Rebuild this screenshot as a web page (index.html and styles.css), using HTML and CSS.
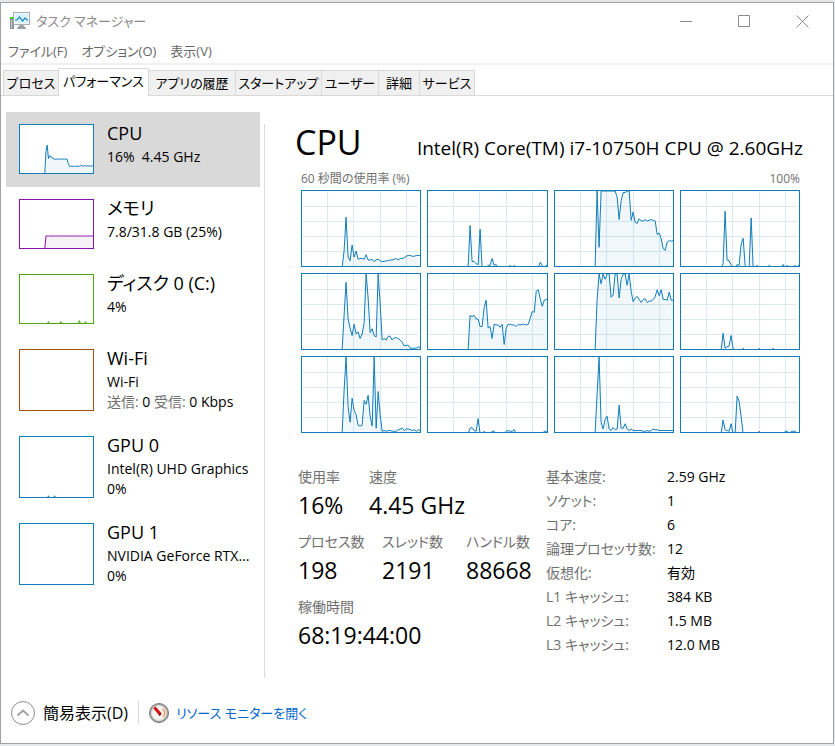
FILE: index.html
```html
<!doctype html>
<html lang="ja">
<head>
  <meta charset="UTF-8" />
  <meta name="viewport" content="width=device-width, initial-scale=1.0" />
  <title>タスク マネージャー</title>
  <link rel="stylesheet" href="styles.css">
</head>
<body>
  <div class="window">
    <header class="title-bar">
      <svg class="app-icon" width="20" height="18" viewBox="0 0 20 18">
        <rect x="0" y="5" width="4" height="12" fill="#8d9094" />
        <rect x="0" y="5" width="3" height="2" fill="#2fd01c" />
        <rect x="1" y="8" width="1" height="8" fill="#c9cccf" />
        <rect x="3.5" y="0.5" width="16" height="12" fill="#f4f6f7" stroke="#a9adb0" />
        <rect x="5" y="2" width="13" height="9" fill="#d5f1fc" />
        <path d="M5 8 L7 8 L9.500 5 L12.500 9 L15 6 L18 8.500" fill="none" stroke="#1686c5" stroke-width="1.200" />
        <path d="M10 13 H13 L16 16 V17 H7 V16 Z" fill="#9b9fa2" />
      </svg>
      <h1 class="title">タスク マネージャー</h1>
      <div class="window-buttons">
        <button type="button" aria-label="最小化">
          <svg width="13" height="13" viewBox="0 0 13 13"><path d="M0 6.500 H12" /></svg>
        </button>
        <button type="button" aria-label="最大化">
          <svg width="13" height="13" viewBox="0 0 13 13"><path d="M0.500 0.500 H11.500 V11.500 H0.500 Z" /></svg>
        </button>
        <button type="button" aria-label="閉じる">
          <svg width="13" height="13" viewBox="0 0 13 13"><path d="M0.500 0.500 L12.500 12.500 M12.500 0.500 L0.500 12.500" /></svg>
        </button>
      </div>
    </header>

    <nav class="menu-bar">
      <button type="button">ファイル(F)</button>
      <button type="button">オプション(O)</button>
      <button type="button">表示(V)</button>
    </nav>

    <div class="tabs" role="tablist">
      <button type="button" role="tab">プロセス</button>
      <button type="button" role="tab" class="active" aria-selected="true">パフォーマンス</button>
      <button type="button" role="tab">アプリの履歴</button>
      <button type="button" role="tab">スタートアップ</button>
      <button type="button" role="tab">ユーザー</button>
      <button type="button" role="tab">詳細</button>
      <button type="button" role="tab">サービス</button>
    </div>

    <div class="content">
      <aside class="sidebar">
        <button type="button" class="resource selected">
          <svg class="chart thumb" data-values="0,45,58,30,36,33,33,29,29,29,29,29,29,29,29,29,29,29,29,20,14,14,14,14,14,14,14,14,14,16,15,14,16,15,14,16,14,15,14,16"></svg>
          <span class="resource-text">
            <span class="resource-name">CPU</span>
            <span>16%&nbsp; 4.45 GHz</span>
          </span>
        </button>
        <button type="button" class="resource memory">
          <svg class="chart thumb" data-values="0,25,25,25,25,25,25,25,25,25,25,25,25,25,25,25,25,25,25,25,25,25,25,25,25,25,25,25,25,25,25,25,25,25,25,25,25,25,25,25"></svg>
          <span class="resource-text">
            <span class="resource-name">メモリ</span>
            <span>7.8/31.8 GB (25%)</span>
          </span>
        </button>
        <button type="button" class="resource disk">
          <svg class="chart thumb" data-values="0,0,0,3,0,0,0,0,0,0,0,0,0,3,0,0,0,0,0,0,0,0,0,0,0,0,0,0,5,0,0,0,0,3,0,0,0,0,0,0"></svg>
          <span class="resource-text">
            <span class="resource-name">ディスク 0 (C:)</span>
            <span>4%</span>
          </span>
        </button>
        <button type="button" class="resource wifi">
          <svg class="chart thumb tall" data-values="0"></svg>
          <span class="resource-text">
            <span class="resource-name">Wi-Fi</span>
            <span>Wi-Fi</span>
            <span><span class="muted">送信:</span> 0 <span class="muted">受信:</span> 0 Kbps</span>
          </span>
        </button>
        <button type="button" class="resource">
          <svg class="chart thumb tall" data-values="0,0,0,2,0,0,0,0,2,0,0,0,0,0,0,0,0,0,0,0,0,0,0,0,0,0,0,0,0,0,0,0,0,0,0,0,0,0,0,0"></svg>
          <span class="resource-text">
            <span class="resource-name">GPU 0</span>
            <span>Intel(R) UHD Graphics</span>
            <span>0%</span>
          </span>
        </button>
        <button type="button" class="resource">
          <svg class="chart thumb tall" data-values="0"></svg>
          <span class="resource-text">
            <span class="resource-name">GPU 1</span>
            <span>NVIDIA GeForce RTX...</span>
            <span>0%</span>
          </span>
        </button>
      </aside>

      <main class="details">
        <div class="heading">
          <h2>CPU</h2>
          <p>Intel(R) Core(TM) i7-10750H CPU @ 2.60GHz</p>
        </div>
        <div class="chart-labels">
          <span>60 秒間の使用率 (%)</span>
          <span>100%</span>
        </div>

        <div class="cores">
          <svg class="chart core" data-values="0,20,65,12,7,28,12,20,9,10,10,9,15,8,8,9,6,8,9,7,6,6,7,7,8,8,9,10,8,10,10,11,13,14,14,13,13,14,14,14"></svg>
          <svg class="chart core" data-values="0,54,6,6,3,2,49,0,0,0,1,1,10,1,2,0,0,0,0,0,0,1,0,1,0,0,0,0,0,0,0,0,0,0,0,0,5,1,0,1"></svg>
          <svg class="chart core" data-values="0,100,25,100,100,100,100,100,100,100,100,92,62,87,98,98,100,100,61,72,58,57,63,60,60,62,60,61,62,61,60,42,44,36,23,21,32,34,33,34"></svg>
          <svg class="chart core" data-values="0,3,73,8,7,2,0,0,2,1,29,37,1,0,0,64,0,0,1,0,0,0,0,0,1,0,0,0,0,0,0,2,0,1,0,0,0,1,0,2"></svg>
          <svg class="chart core" data-values="0,45,89,40,28,18,33,20,23,14,20,35,100,68,22,27,18,16,100,60,12,14,12,17,17,12,15,15,14,12,9,4,5,5,1,1,1,1,3,2"></svg>
          <svg class="chart core" data-values="0,45,43,45,40,40,30,30,55,65,28,30,14,33,32,32,29,33,6,28,33,33,32,32,30,33,32,33,33,32,33,41,50,49,77,79,67,57,65,66"></svg>
          <svg class="chart core" data-values="0,65,100,87,100,93,100,100,69,72,100,100,68,93,100,100,85,100,77,63,68,70,66,62,66,67,62,64,64,66,70,79,71,79,66,66,65,76,65,65"></svg>
          <svg class="chart core" data-values="0,21,1,3,4,18,1,0,0,0,0,1,0,0,0,0,0,0,0,1,0,0,0,0,0,0,1,0,0,0,0,0,0,0,0,0,0,0,0,0"></svg>
          <svg class="chart core" data-values="0,55,100,34,13,45,29,23,9,8,9,42,37,49,21,8,100,5,54,23,1,2,1,2,2,1,1,1,3,4,5,2,4,4,3,2,3,1,3,2"></svg>
          <svg class="chart core" data-values="0,5,6,2,1,18,0,0,1,0,0,0,1,1,0,0,0,0,0,1,2,1,1,3,0,0,0,0,0,0,0,0,0,0,0,0,0,0,1,1"></svg>
          <svg class="chart core" data-values="0,50,100,13,4,17,21,4,2,6,3,4,36,5,5,11,4,2,4,2,2,2,2,2,1,1,2,1,2,4,3,3,2,2,2,2,2,2,2,2"></svg>
          <svg class="chart core" data-values="0,16,3,2,1,11,0,0,48,41,21,0,0,0,0,0,0,0,0,1,0,0,0,0,0,0,0,0,0,0,0,0,1,1,0,1,1,1,0,0"></svg>
        </div>

        <div class="stats">
          <div class="counters">
            <dl class="counter-row usage">
              <div><dt>使用率</dt><dd>16%</dd></div>
              <div><dt>速度</dt><dd>4.45 GHz</dd></div>
            </dl>
            <dl class="counter-row counts">
              <div><dt>プロセス数</dt><dd>198</dd></div>
              <div><dt>スレッド数</dt><dd>2191</dd></div>
              <div><dt>ハンドル数</dt><dd>88668</dd></div>
            </dl>
            <dl class="counter-row">
              <div><dt>稼働時間</dt><dd>68:19:44:00</dd></div>
            </dl>
          </div>

          <table class="specs">
            <tr><th scope="row">基本速度:</th><td>2.59 GHz</td></tr>
            <tr><th scope="row">ソケット:</th><td>1</td></tr>
            <tr><th scope="row">コア:</th><td>6</td></tr>
            <tr><th scope="row">論理プロセッサ数:</th><td>12</td></tr>
            <tr><th scope="row">仮想化:</th><td>有効</td></tr>
            <tr><th scope="row">L1 キャッシュ:</th><td>384 KB</td></tr>
            <tr><th scope="row">L2 キャッシュ:</th><td>1.5 MB</td></tr>
            <tr><th scope="row">L3 キャッシュ:</th><td>12.0 MB</td></tr>
          </table>
        </div>
      </main>
    </div>

    <footer class="footer">
      <button type="button" class="fewer-details">
        <svg width="24" height="24" viewBox="0 0 24 24" fill="none">
          <circle cx="12" cy="12" r="11.500" stroke="#8c8c8c" />
          <path d="M6.500 14.500 L12 9.500 L17.500 14.500" stroke="#a3a3a3" stroke-width="2" />
        </svg>
        簡易表示(D)
      </button>
      <a href="#" class="monitor-link">
        <svg width="20" height="20" viewBox="0 0 20 20">
          <circle cx="10" cy="10" r="9.500" fill="#a5a5a5" stroke="#77797a" />
          <circle cx="10" cy="10" r="7.500" fill="#f5f4f1" stroke="#d9d9d9" />
          <path d="M13.500 5.500 A5.500 5.500 0 0 1 14 14" fill="none" stroke="#ee9b63" stroke-width="1.500" />
          <path d="M5.500 4.500 L11.500 11.500" stroke="#d40f12" stroke-width="3" />
          <path d="M10 12.500 L12 11" stroke="#6b1d1d" stroke-width="1.500" />
        </svg>
        リソース モニターを開く
      </a>
    </footer>
  </div>

  <script src="charts.js"></script>
</body>
</html>
```
FILE: styles.css
```css
* {
  box-sizing: border-box;
  margin: 0;
  padding: 0;
}

body {
  font-family: "Open Sans", "Noto Sans CJK JP", sans-serif;
  font-size: 14px;
  line-height: 20px;
  font-feature-settings: "palt";
  background: #e6e7e8;
  color: #000;
  min-height: 100vh;
  padding: 2px 1px 2px 0;
  display: flex;
}

button {
  font: inherit;
  font-feature-settings: inherit;
  color: inherit;
  background: none;
  border: none;
  text-align: left;
  white-space: nowrap;
}

svg {
  display: block;
  flex: none;
}

.window {
  flex: 1;
  min-width: 0;
  display: flex;
  flex-direction: column;
  background: #fff;
  border: 1px solid #a0a2a5;
}

/* ===== Title bar and menus ===== */
.title-bar {
  display: flex;
  align-items: center;
  height: 36px;
  padding: 0 2px 0 9px;
}

.title {
  flex: 1;
  margin-left: 6px;
  font-size: 13px;
  font-weight: 400;
  color: #8c8c8c;
}

.window-buttons {
  display: flex;
}

.window-buttons button {
  width: 58px;
  height: 36px;
  display: flex;
  align-items: center;
  justify-content: center;
}

.window-buttons path {
  fill: none;
  stroke: #8c8c8c;
}

.menu-bar {
  display: flex;
  gap: 14px;
  height: 26px;
  padding-left: 7px;
  font-size: 13px;
  color: #666;
  border-bottom: 2px solid #f0f0f0;
}

.tabs {
  display: grid;
  grid-template-columns: 56px 90px 87px 86px 57px 41px 55px;
  align-items: end;
  padding: 3px 0 0 2px;
  font-size: 13px;
  border-bottom: 1px solid #d9d9d9;
}

.tabs button {
  height: 25px;
  text-align: center;
  background: #f0f0f0;
  border: 1px solid #d9d9d9;
  border-width: 1px 1px 0 0;
}

.tabs button:first-child {
  border-left-width: 1px;
}

.tabs .active {
  height: 28px;
  margin: 0 0 -1px -1px;
  padding-bottom: 3px;
  background: #fff;
  border-left-width: 1px;
}

/* ===== Resource list ===== */
.content {
  flex: 1;
  display: flex;
  padding-top: 16px;
}

.sidebar {
  width: 254px;
  flex: none;
  margin-left: 5px;
}

.resource {
  --line: #117dbb;
  --fill: #f1f6fa;
  display: flex;
  width: 100%;
  gap: 13px;
  padding: 12px 0 13px 13px;
}

.resource.selected {
  background: #d9d9d9;
}

.memory {
  --line: #8b12ae;
  --fill: #f4f2f4;
}

.disk {
  --line: #4da60c;
}

.wifi {
  --line: #a74f01;
}

.resource-text {
  height: 50px;
  display: flex;
  flex-direction: column;
}

.resource-name {
  font-size: 18px;
  line-height: 18px;
  margin-bottom: 5px;
}

.muted {
  color: #707070;
}

.chart {
  background: #fff;
  border: 1px solid var(--line);
}

.chart polyline {
  fill: var(--fill);
  stroke: var(--line);
}

.chart path {
  fill: none;
  stroke: #d9eaf4;
  shape-rendering: crispEdges;
}

.thumb {
  width: 75px;
  height: 50px;
}

.thumb.tall {
  height: 62px;
}

/* ===== CPU details ===== */
.details {
  --line: #117dbb;
  --fill: rgba(17, 125, 187, 0.06);
  flex: 1;
  min-width: 0;
  margin: 12px 0 16px 4px;
  padding: 0 30px;
  border-left: 1px solid #d9d9d9;
}

.heading {
  display: flex;
  align-items: baseline;
  justify-content: space-between;
  white-space: nowrap;
}

.heading h2 {
  font-size: 34px;
  line-height: 36px;
  font-weight: 400;
}

.heading p {
  font-size: 19px;
}

.chart-labels {
  display: flex;
  justify-content: space-between;
  margin: 9px 3px 1px 6px;
  font-size: 12px;
  color: #707070;
}

.cores {
  display: grid;
  grid-template-columns: repeat(4, 1fr);
  gap: 6px;
  margin: 0 3px 0 6px;
}

.core {
  width: 100%;
  height: 77px;
}

.stats {
  display: flex;
  margin: 34px 0 0 3px;
}

.counters {
  width: 248px;
  flex: none;
}

.counter-row {
  display: flex;
  height: 65px;
  white-space: nowrap;
}

.counter-row div {
  min-width: 84px;
}

.usage div {
  min-width: 71px;
}

.counter-row dt {
  color: #707070;
}

.counter-row dd {
  font-size: 23px;
  line-height: 36px;
}

.specs {
  border-collapse: collapse;
  align-self: flex-start;
  white-space: nowrap;
}

.specs th {
  width: 121px;
  font-weight: 400;
  text-align: left;
  color: #707070;
}

.specs th,
.specs td {
  height: 24px;
  padding-bottom: 4px;
}

/* ===== Footer ===== */
.footer {
  display: flex;
  align-items: center;
  height: 49px;
  padding: 0 0 12px 10px;
}

.fewer-details {
  display: flex;
  align-items: center;
  gap: 8px;
  padding-right: 10px;
  border-right: 1px solid #d9d9d9;
  font-size: 16px;
  line-height: 16px;
}

.monitor-link {
  display: flex;
  align-items: center;
  gap: 7px;
  margin-left: 10px;
  font-size: 13px;
  color: #0066cc;
  text-decoration: none;
  white-space: nowrap;
}
```
FILE: charts.js
```js
// Each chart shows 60 samples, newest at the right edge. Values are percentages.
const STEP = 6;
const WIDTH = 59 * STEP;
const HEIGHT = 225;
// idle samples and the closing edge run just outside the view, under the border
const BASELINE = HEIGHT + 5;
const SVG_NS = 'http://www.w3.org/2000/svg';

function addShape(svg, name, attribute, value) {
  const shape = document.createElementNS(SVG_NS, name);
  shape.setAttribute(attribute, value);
  shape.setAttribute('vector-effect', 'non-scaling-stroke');
  svg.appendChild(shape);
}

document.querySelectorAll('.chart').forEach((svg) => {
  const values = svg.dataset.values.split(',').map(Number);
  const start = WIDTH - (values.length - 1) * STEP;
  const toY = (v) => (v === 0 ? BASELINE : HEIGHT - v * HEIGHT / 100);
  const points = values.map((v, i) => `${start + i * STEP},${toY(v)}`);

  svg.setAttribute('viewBox', `0 0 ${WIDTH} ${HEIGHT}`);
  svg.setAttribute('preserveAspectRatio', 'none');

  if (svg.classList.contains('core')) {
    addShape(svg, 'path', 'd', 'M77 0V225M155 0V225M236 0V225M314 0V225M0 46H348M0 91H348M0 136H348M0 181H348');
  }
  const last = values[values.length - 1];
  points.push(`${WIDTH + STEP},${toY(last)}`, `${WIDTH + STEP},${BASELINE}`);
  addShape(svg, 'polyline', 'points', points.join(' '));
});
```
